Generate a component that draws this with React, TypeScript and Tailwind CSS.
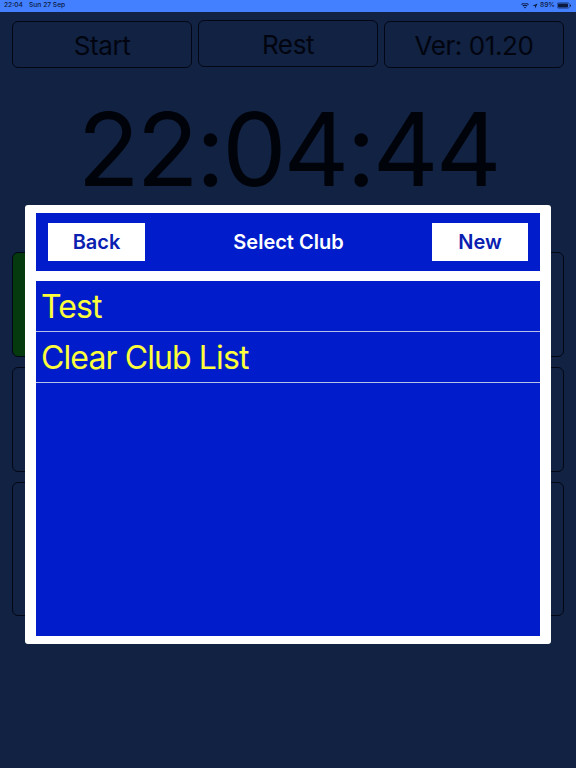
import React from "react";

function Panel({ className, children }: { className: string; children?: React.ReactNode }) {
  return (
    <div className={"flex items-center justify-center rounded-[6px] border border-[#030614] text-[#02050f] " + className}>
      {children}
    </div>
  );
}

export default function App() {
  return (
    <div className="relative h-[768px] w-[576px] overflow-hidden bg-[#112242] font-['Inter']">
      <div className="flex h-[11.5px] items-center justify-between bg-[#4280ff] pl-[4px] pr-[5px] text-[6.700px] font-medium leading-none text-[#0c1a40]">
        <div className="flex gap-[6px]">
          <span>22:04</span>
          <span>Sun 27 Sep</span>
        </div>
        <div className="flex items-center gap-[2px]">
          <svg width="8" height="6" viewBox="0 0 18 14" fill="#0c1a40">
            <path d="M9 13 L6.500 10 A4 4 0 0 1 11.500 10 Z M4.800 8 L3 6 A9 9 0 0 1 15 6 L13.200 8 A6.500 6.500 0 0 0 4.800 8 Z M1.800 4.800 L0 3 A13 13 0 0 1 18 3 L16.200 4.800 A10.500 10.500 0 0 0 1.800 4.800 Z" />
          </svg>
          <svg className="ml-[1px]" width="6" height="6" viewBox="0 0 14 14" fill="#0c1a40">
            <path d="M13 1 L1 6.500 L7 7 L7.500 13 Z" />
          </svg>
          <span>89%</span>
          <svg width="14" height="7" viewBox="0 0 28 14">
            <rect x="0.500" y="1.500" width="24" height="11" rx="3" fill="none" stroke="#0c1a40" strokeWidth="1" />
            <rect x="2" y="3" width="20" height="8" rx="1.500" fill="#0c1a40" />
            <rect x="26" y="5" width="2" height="4" rx="1" fill="#0c1a40" />
          </svg>
        </div>
      </div>

      <div className="flex flex-col px-[12px]">
        <div className="mt-[8.500px] flex h-[48px] gap-[6px] text-[26px] tracking-[-0.400px]">
          <Panel className="mt-[1px] h-[47px] w-[180px] pt-[1px]">Start</Panel>
          <Panel className="h-[47px] w-[180px] pt-[1px]">Rest</Panel>
          <Panel className="mt-[1px] h-[47px] w-[180px] pt-[1px]">Ver: 01.20</Panel>
        </div>

        <div className="mt-[21px] flex h-[120px] items-center justify-center text-[102px] leading-none tracking-[-3px] text-[#01030a]">
          22:04:44
        </div>

        <div className="mt-[43px] flex flex-col gap-[10px]">
          <div className="flex h-[105px] gap-[6px]">
            <Panel className="w-[270px] bg-[#053a0e]" />
            <Panel className="flex-1" />
          </div>
          <Panel className="h-[105px]" />
          <Panel className="h-[134px] rounded-[2px]" />
        </div>
      </div>

      <div className="absolute left-[25px] top-[205px] flex h-[439px] w-[526px] flex-col rounded-[3px] bg-white px-[11px] py-[8px]">
        <div className="flex h-[58px] items-center justify-between bg-[#001ccb] px-[12px]">
          <div className="flex h-[38px] w-[97px] items-center justify-center bg-white text-[20px] font-semibold text-[#0a20b0]">
            Back
          </div>
          <div className="text-[20px] font-semibold text-white">Select Club</div>
          <div className="flex h-[38px] w-[96px] items-center justify-center bg-white text-[20px] font-semibold text-[#0a20b0]">
            New
          </div>
        </div>
        <div className="mt-[10px] flex-1 bg-[#001ccb] text-[32px] leading-none tracking-[-0.900px] text-[#fdfd3c]">
          <div className="flex h-[50.500px] items-center border-b border-[#b9c0ea] pl-[5px] pt-[3px]">Test</div>
          <div className="flex h-[51px] items-center border-b border-[#b9c0ea] pl-[5px] pt-[3px]">Clear Club List</div>
        </div>
      </div>
    </div>
  );
}
